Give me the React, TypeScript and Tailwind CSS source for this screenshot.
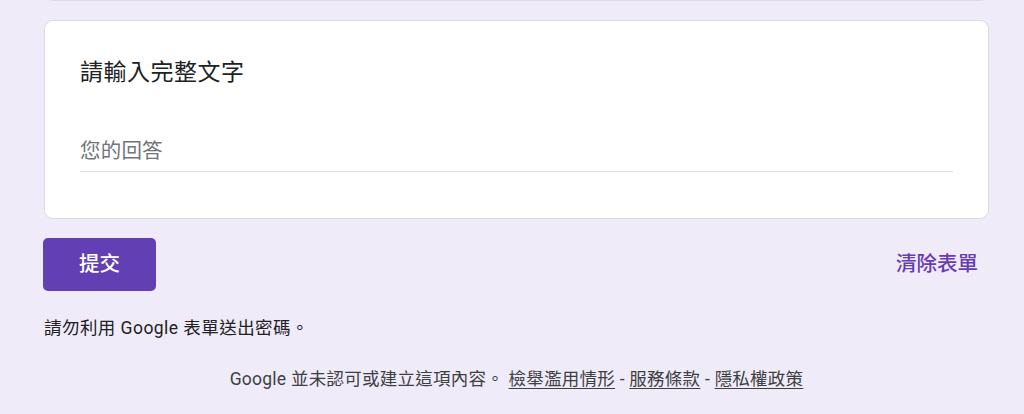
const font = { fontFamily: 'Roboto, "Noto Sans CJK TC", sans-serif' };

function FooterLink({ children }: { children: string }) {
  return <a className="underline underline-offset-[3px]">{children}</a>;
}

export default function App() {
  return (
    <div className="h-[414px] overflow-hidden bg-[#f0ebf8]" style={font}>
      <div className="ml-[44px] flex w-[945px] flex-col">
        {/* previous question card, scrolled off the top */}
        <div className="-mt-[20px] h-[21px] rounded-b-[9px] border border-[#dadce0] bg-white" />

        <div className="mt-[19px] flex flex-col rounded-[9px] border border-[#dadce0] bg-white px-[35px] pt-[36px] pb-[46px]">
          <div className="text-[23px] leading-[32px] tracking-[0.5px] text-[#202124]">請輸入完整文字</div>
          <div className="mt-[48px] border-b border-[#dadce0] pb-[6px]">
            <div className="text-[20.5px] leading-[28px] tracking-[0.2px] text-[#70757a]">您的回答</div>
          </div>
        </div>

        <div className="mt-[19px] flex items-center justify-between">
          <button className="-ml-px h-[53px] w-[113px] rounded-[5px] bg-[#6240b4] text-[20.5px] font-medium text-white">
            提交
          </button>
          <button className="h-[53px] px-[11px] text-[20.5px] font-medium text-[#673ab7]">清除表單</button>
        </div>

        <div className="mt-[25px] text-[17.5px] leading-[24px] tracking-[0.45px] text-[#202124]">
          請勿利用 Google 表單送出密碼。
        </div>

        <div className="mt-[27px] text-center text-[17.5px] leading-[24px] tracking-[0.25px] text-[#3c4043]">
          Google 並未認可或建立這項內容。 <FooterLink>檢舉濫用情形</FooterLink> -{' '}
          <FooterLink>服務條款</FooterLink> - <FooterLink>隱私權政策</FooterLink>
        </div>
      </div>
    </div>
  );
}
